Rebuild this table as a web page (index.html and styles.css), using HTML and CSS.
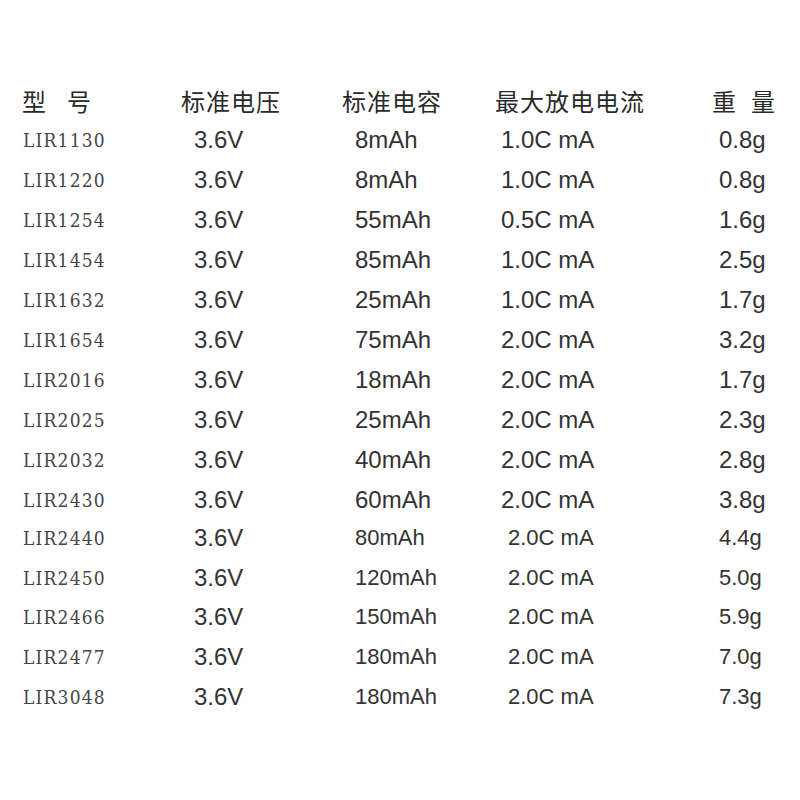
FILE: index.html
```html
<!DOCTYPE html>
<html lang="zh">
<head>
<meta charset="utf-8">
<title>LIR 电池参数</title>
<link rel="stylesheet" href="styles.css">
</head>
<body>
<div class="sheet">
  <div class="row head">
    <div class="c1"><span class="wide">型</span>号</div>
    <div class="c2">标准电压</div>
    <div class="c3">标准电容</div>
    <div class="c4">最大放电电流</div>
    <div class="c5"><span class="gap">重</span>量</div>
  </div>
  <div class="row"><div class="c1 model">LIR1130</div><div class="c2 v">3.6V</div><div class="c3 v">8mAh</div><div class="c4 v">1.0C mA</div><div class="c5 v">0.8g</div></div>
  <div class="row"><div class="c1 model">LIR1220</div><div class="c2 v">3.6V</div><div class="c3 v">8mAh</div><div class="c4 v">1.0C mA</div><div class="c5 v">0.8g</div></div>
  <div class="row"><div class="c1 model">LIR1254</div><div class="c2 v">3.6V</div><div class="c3 v">55mAh</div><div class="c4 v">0.5C mA</div><div class="c5 v">1.6g</div></div>
  <div class="row"><div class="c1 model">LIR1454</div><div class="c2 v">3.6V</div><div class="c3 v">85mAh</div><div class="c4 v">1.0C mA</div><div class="c5 v">2.5g</div></div>
  <div class="row"><div class="c1 model">LIR1632</div><div class="c2 v">3.6V</div><div class="c3 v">25mAh</div><div class="c4 v">1.0C mA</div><div class="c5 v">1.7g</div></div>
  <div class="row"><div class="c1 model">LIR1654</div><div class="c2 v">3.6V</div><div class="c3 v">75mAh</div><div class="c4 v">2.0C mA</div><div class="c5 v">3.2g</div></div>
  <div class="row"><div class="c1 model">LIR2016</div><div class="c2 v">3.6V</div><div class="c3 v">18mAh</div><div class="c4 v">2.0C mA</div><div class="c5 v">1.7g</div></div>
  <div class="row"><div class="c1 model">LIR2025</div><div class="c2 v">3.6V</div><div class="c3 v">25mAh</div><div class="c4 v">2.0C mA</div><div class="c5 v">2.3g</div></div>
  <div class="row"><div class="c1 model">LIR2032</div><div class="c2 v">3.6V</div><div class="c3 v">40mAh</div><div class="c4 v">2.0C mA</div><div class="c5 v">2.8g</div></div>
  <div class="row"><div class="c1 model">LIR2430</div><div class="c2 v">3.6V</div><div class="c3 v">60mAh</div><div class="c4 v">2.0C mA</div><div class="c5 v">3.8g</div></div>
  <div class="row small first"><div class="c1 model">LIR2440</div><div class="c2 v">3.6V</div><div class="c3 v">80mAh</div><div class="c4 v">2.0C mA</div><div class="c5 v">4.4g</div></div>
  <div class="row small"><div class="c1 model">LIR2450</div><div class="c2 v">3.6V</div><div class="c3 v">120mAh</div><div class="c4 v">2.0C mA</div><div class="c5 v">5.0g</div></div>
  <div class="row small"><div class="c1 model">LIR2466</div><div class="c2 v">3.6V</div><div class="c3 v">150mAh</div><div class="c4 v">2.0C mA</div><div class="c5 v">5.9g</div></div>
  <div class="row small"><div class="c1 model">LIR2477</div><div class="c2 v">3.6V</div><div class="c3 v">180mAh</div><div class="c4 v">2.0C mA</div><div class="c5 v">7.0g</div></div>
  <div class="row small"><div class="c1 model">LIR3048</div><div class="c2 v">3.6V</div><div class="c3 v">180mAh</div><div class="c4 v">2.0C mA</div><div class="c5 v">7.3g</div></div>
</div>
</body>
</html>
```
FILE: styles.css
```css
html, body {
  margin: 0;
  padding: 0;
  background: #ffffff;
}

body {
  color: #333333;
  font-family: "Liberation Sans", Arial, "Noto Sans CJK SC", sans-serif;
}

.sheet {
  padding: 80px 0 0 22px;
}

.row {
  display: grid;
  grid-template-columns: 159px 161px 153px 217px 80px;
  height: 40px;
  align-items: center;
  font-size: 24px;
  white-space: nowrap;
}

.head {
  font-family: "Noto Sans CJK SC", "Liberation Sans", sans-serif;
  font-size: 24px;
  letter-spacing: 1px;
  color: #2a2a2a;
}

.head .wide {
  margin-right: 20px;
}

.head .gap {
  margin-right: 14px;
}

.model {
  font-family: "DejaVu Serif Condensed", "DejaVu Serif", "Liberation Serif", serif;
  font-stretch: condensed;
  font-size: 19px;
  letter-spacing: 1.2px;
  color: #464646;
  padding-left: 1px;
}

.c2.v { padding-left: 13px; }
.c3.v { padding-left: 13px; }
.c4.v { padding-left: 6px; }
.c5.v { padding-left: 7px; }

.small {
  height: 39.75px;
}

.small.first {
  margin-top: -2px;
}

.small .c3,
.small .c4,
.small .c5 {
  font-size: 22px;
}

.small .c4.v { padding-left: 13px; }
```
